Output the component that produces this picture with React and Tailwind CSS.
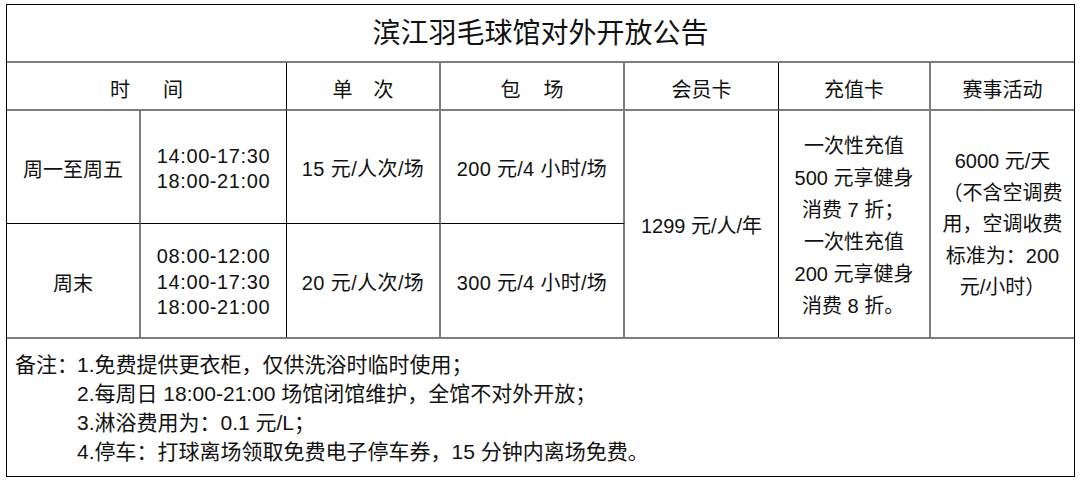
const font = "font-['Liberation_Sans','Noto_Sans_CJK_SC',sans-serif]";

const Cell = ({ className = "", children }) => (
  <div className={`flex flex-col items-center justify-center text-center ${className}`}>{children}</div>
);

export default function App() {
  return (
    <div className={`w-[1080px] h-[480px] bg-white text-[#111] ${font}`}>
      <div className="ml-[6px] pt-[4px]">
        <div className="w-[1069px] border border-black">
          {/* Title */}
          <div className="h-[58px] flex items-center justify-center border-b-2 border-[#7d7d7d] text-[28px] pt-[2px]">
            滨江羽毛球馆对外开放公告
          </div>

          {/* Table body */}
          <div className="grid grid-cols-[134px_146px_154px_184px_154px_152px_1fr] grid-rows-[48px_113px_113px] text-[20px]">
            {/* header */}
            <div className="col-span-2 flex items-center justify-center gap-[33px] pt-[8px] border-r border-b-2 border-r-black border-b-[#7d7d7d]">
              <span>时</span>
              <span>间</span>
            </div>
            <div className="flex items-center justify-center gap-[21px] pt-[8px] border-r-2 border-b-2 border-r-[#7d7d7d] border-b-[#7d7d7d]">
              <span>单</span>
              <span>次</span>
            </div>
            <div className="flex items-center justify-center gap-[23px] pt-[8px] border-r-2 border-b-2 border-r-[#7d7d7d] border-b-[#7d7d7d]">
              <span>包</span>
              <span>场</span>
            </div>
            <div className="flex items-center justify-center pt-[8px] border-r border-b-2 border-r-black border-b-[#7d7d7d]">
              会员卡
            </div>
            <div className="flex items-center justify-center pt-[8px] border-r-2 border-b-2 border-r-[#7d7d7d] border-b-[#7d7d7d]">
              充值卡
            </div>
            <div className="flex items-center justify-center pt-[8px] border-b-2 border-b-[#7d7d7d]">
              赛事活动
            </div>

            {/* weekday row */}
            <Cell className="pt-[6px] border-r-2 border-b border-r-[#7d7d7d] border-b-black">周一至周五</Cell>
            <Cell className="pt-[4px] leading-[25px] tracking-[0.6px] border-r border-b border-black">
              <span>14:00-17:30</span>
              <span>18:00-21:00</span>
            </Cell>
            <Cell className="pt-[4px] tracking-[0.4px] border-r-2 border-b border-r-[#7d7d7d] border-b-black">15 元/人次/场</Cell>
            <Cell className="pt-[4px] tracking-[0.3px] border-r-2 border-b border-r-[#7d7d7d] border-b-black">200 元/4 小时/场</Cell>

            <Cell className="row-span-2 pt-[4px] border-r border-black">1299 元/人/年</Cell>
            <Cell className="row-span-2 pt-[4px] leading-[32px] border-r-2 border-[#7d7d7d]">
              <span>一次性充值</span>
              <span>500 元享健身</span>
              <span className="self-start pl-[23px]">消费 7 折；</span>
              <span>一次性充值</span>
              <span>200 元享健身</span>
              <span className="self-start pl-[23px]">消费 8 折。</span>
            </Cell>
            <Cell className="row-span-2 pt-[2px] leading-[31.5px]">
              <span>6000 元/天</span>
              <span>（不含空调费</span>
              <span>用，空调收费</span>
              <span>标准为：200</span>
              <span>元/小时）</span>
            </Cell>

            {/* weekend row */}
            <Cell className="pt-[6px] border-r-2 border-r-[#7d7d7d]">周末</Cell>
            <Cell className="pt-[4px] leading-[25.5px] tracking-[0.6px] border-r border-black">
              <span>08:00-12:00</span>
              <span>14:00-17:30</span>
              <span>18:00-21:00</span>
            </Cell>
            <Cell className="pt-[4px] tracking-[0.4px] border-r-2 border-r-[#7d7d7d]">20 元/人次/场</Cell>
            <Cell className="pt-[4px] tracking-[0.3px] border-r-2 border-r-[#7d7d7d]">300 元/4 小时/场</Cell>
          </div>

          {/* Notes */}
          <div className="h-[139px] border-t-2 border-[#7d7d7d] pl-[8px] pt-[11px] text-[21px] leading-[29px]">
            <div className="flex">
              <span className="w-[62px] shrink-0 whitespace-nowrap">备注：</span>
              <div className="flex flex-col whitespace-nowrap">
                <span>1.免费提供更衣柜，仅供洗浴时临时使用；</span>
                <span>2.每周日 18:00-21:00 场馆闭馆维护，全馆不对外开放；</span>
                <span>3.淋浴费用为：0.1 元/L；</span>
                <span>4.停车：打球离场领取免费电子停车券，15 分钟内离场免费。</span>
              </div>
            </div>
          </div>
        </div>
      </div>
    </div>
  );
}
